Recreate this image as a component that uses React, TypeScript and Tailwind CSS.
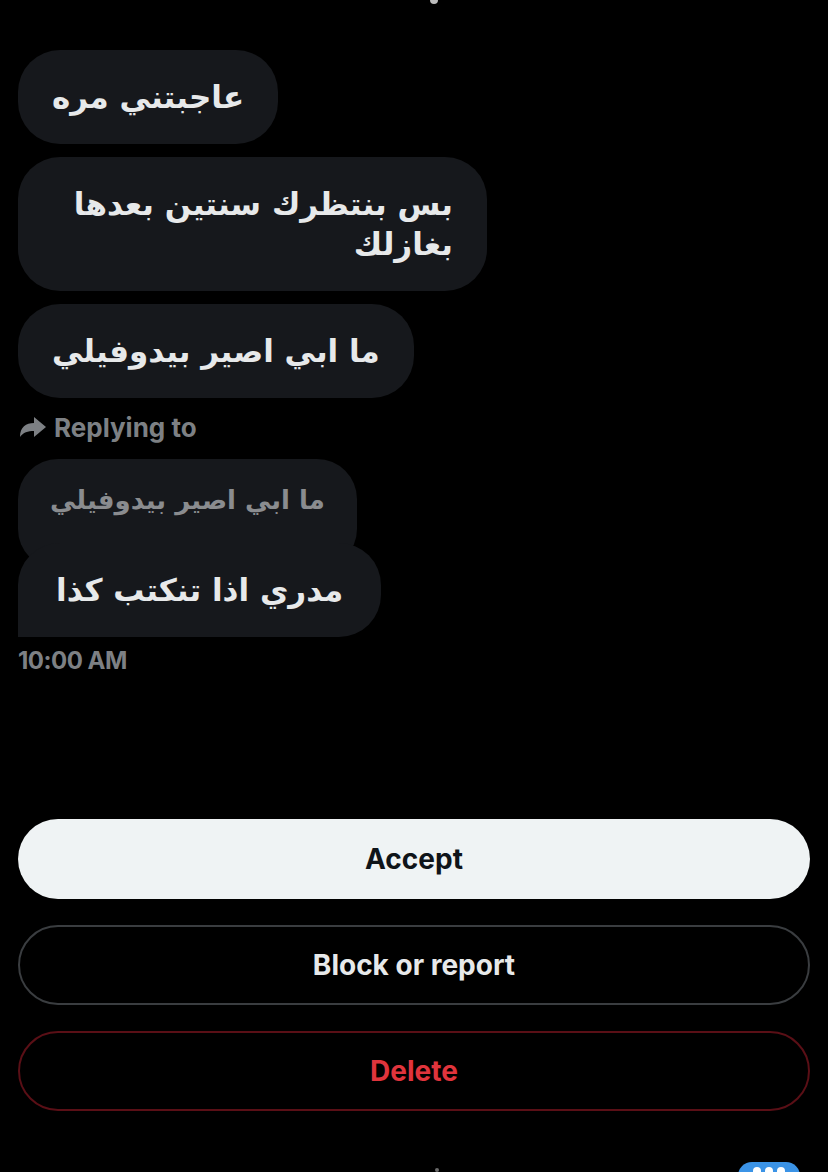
import React from "react";

const arabic = "font-['DejaVu_Sans','Noto_Sans',sans-serif]";
const latin = "font-['Inter','Roboto',sans-serif]";

function Bubble({ text, className = "" }: { text: React.ReactNode; className?: string }) {
  return (
    <div
      dir="rtl"
      className={`self-start bg-[#16181c] text-[#e7e9ea] rounded-[42px] py-[27px] text-[31px] leading-[40px] font-bold ${arabic} ${className}`}
    >
      {text}
    </div>
  );
}

function ReplyArrow() {
  return (
    <svg width="30" height="26" viewBox="0 0 30 26" fill="#7d8084">
      <path d="M2 23 C2 13 8 9 16 9 V3 L28 13 L16 23 V17 C10 17 5 18.5 2 23 Z" />
    </svg>
  );
}

export default function App() {
  return (
    <div className="w-[828px] h-[1172px] overflow-hidden bg-black flex flex-col px-[18px]">
      {/* status bar remnant */}
      <div className="h-[4px] flex justify-center">
        <div className="w-[8px] h-[4px] ml-[40px] rounded-b-full bg-[#bcbcbc]" />
      </div>

      {/* Messages */}
      <div className="flex flex-col gap-[13px] mt-[46px]">
        <Bubble text="عاجبتني مره" className="px-[34px]" />
        <Bubble text={<>بس بنتظرك سنتين بعدها<br />بغازلك</>} className="w-[469px] px-[34px]" />
        <Bubble text="ما ابي اصير بيدوفيلي" className="px-[34px]" />
      </div>

      {/* Replying to */}
      <div className={`flex items-center gap-[6px] mt-[14px] h-[30px] text-[#7d8084] text-[26px] font-bold ${latin}`}>
        <ReplyArrow />
        <span>Replying to</span>
      </div>

      <div className="flex flex-col mt-[17px]">
        <div
          dir="rtl"
          className={`self-start bg-[#16181c] text-[#8a8c8f] rounded-[40px] px-[32px] pt-[22px] pb-[50px] text-[26px] leading-[38px] font-bold ${arabic}`}
        >
          ما ابي اصير بيدوفيلي
        </div>
        <Bubble text="مدري اذا تنكتب كذا" className="relative -mt-[26px] rounded-bl-none px-[38px]" />
      </div>

      <div className={`mt-[10px] text-[24px] leading-[28px] font-bold text-[#7d8084] tracking-[-0.5px] ${latin}`}>
        10:00 AM
      </div>

      {/* Actions */}
      <div className={`flex flex-col gap-[26px] mt-[144px] text-[28px] font-bold ${latin}`}>
        <button className="h-[80px] rounded-full bg-[#eff3f4] text-[#0f1419]">Accept</button>
        <button className="h-[80px] rounded-full border-2 border-[#3a3d40] text-[#e7e9ea]">Block or report</button>
        <button className="h-[80px] rounded-full border-2 border-[#5a0f16] text-[#e0343c]">Delete</button>
      </div>

      {/* bottom bar remnant */}
      <div className="flex items-start mt-[51px]">
        <div className="w-[4px] h-[4px] ml-[417px] mt-[6px] rounded-full bg-[#6a6a6a]" />
        <div className="ml-auto mr-[10px] w-[62px] h-[30px] rounded-[14px] bg-[#3b93e6] flex justify-center gap-[4px] pt-[5px]">
          <span className="w-[8px] h-[8px] rounded-full bg-white" />
          <span className="w-[8px] h-[8px] rounded-full bg-white" />
          <span className="w-[8px] h-[8px] rounded-full bg-white" />
        </div>
      </div>
    </div>
  );
}
